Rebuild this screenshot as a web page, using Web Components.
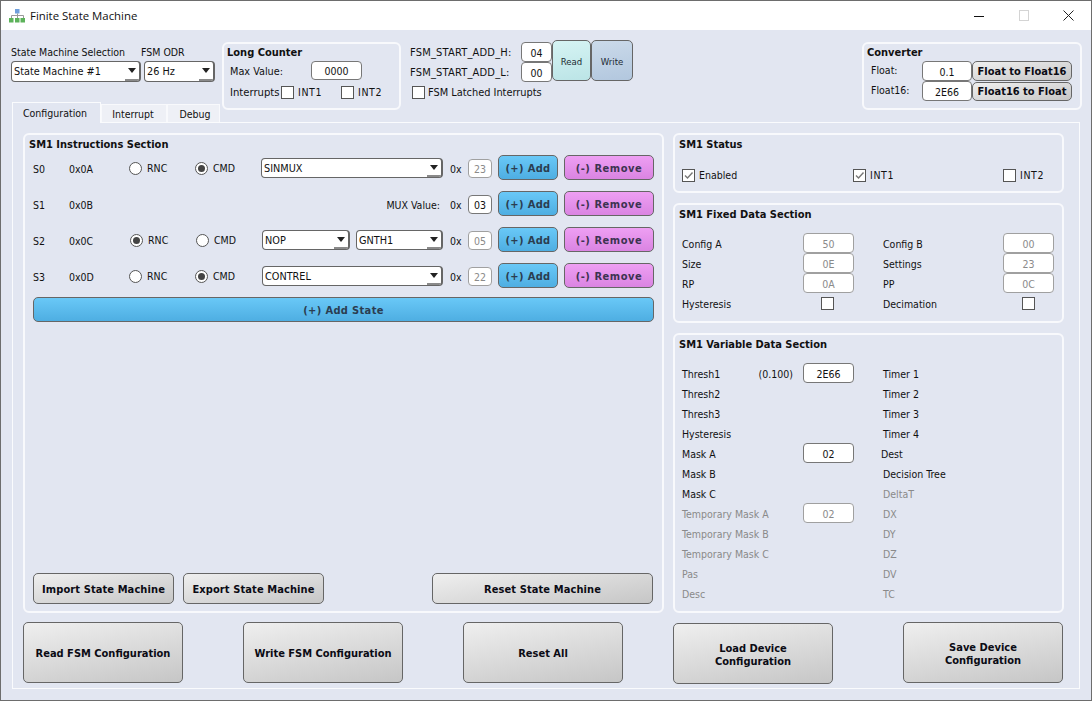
<!DOCTYPE html>
<html>
<head>
<meta charset="utf-8">
<title>Finite State Machine</title>
<style>
html, body { margin: 0; padding: 0; background: #e2e6f1; }
body { font: 10.5px "DejaVu Sans Condensed", "DejaVu Sans", sans-serif; color: #111; }
</style>
</head>
<body>
<fsm-window></fsm-window>
<script>
function define(name, css, html) {
  customElements.define(name, class extends HTMLElement {
    connectedCallback() {
      if (this.shadowRoot) return;
      const root = this.attachShadow({ mode: "open" });
      const a = (k, d = "") => this.hasAttribute(k) ? this.getAttribute(k) : d;
      root.innerHTML = `<style>${css}</style>` + html(a, this);
    }
  });
}

define("fsm-button", `
:host { display: block; box-sizing: border-box; --c1: #efefef; --c2: #c6c6c6; --fg: #0b0b14; --dir: 170deg; --ls: 0; }
:host([tone="blue"]) { --c1: #69c8f7; --c2: #4eaee2; --fg: #2b3d50; --dir: 180deg; --ls: .35px; }
:host([tone="pink"]) { --c1: #ee9ff3; --c2: #da84e2; --fg: #3c3350; --dir: 180deg; --ls: .55px; }
:host([tone="teal"]) { --c1: #d6f4f4; --c2: #bbe4e6; --fg: #1c2b33; }
:host([tone="steel"]) { --c1: #cbdaea; --c2: #b2c7de; --fg: #1c2b33; }
.b {
  box-sizing: border-box; width: 100%; height: 100%; padding-top: 1px;
  display: flex; align-items: center; justify-content: center; text-align: center;
  border: 1px solid #666; border-radius: 5px;
  background: linear-gradient(var(--dir), var(--c1), var(--c2));
  color: var(--fg); font-size: 11px; font-weight: bold; line-height: 13px; white-space: pre-line; letter-spacing: var(--ls);
}
:host([flat]) .b { padding-top: 0; }
:host([low]) .b { padding-top: 3px; }
:host([tone="teal"]) .b, :host([tone="steel"]) .b { font-weight: normal; font-size: 9.5px; }
`, (a) => `<div class="b"><slot></slot></div>`);

define("fsm-field", `
:host { display: block; box-sizing: border-box; }
.f {
  box-sizing: border-box; width: 100%; height: 100%; padding-top: 1px;
  display: flex; align-items: center; justify-content: center;
  background: #fff; border: 1px solid #777; border-radius: 4px;
}
:host([disabled]) .f { color: #8a8a8a; border-color: #a0a0a0; }
`, (a) => `<div class="f"><slot></slot></div>`);

define("fsm-combo", `
:host { display: block; box-sizing: border-box; height: 20px; }
.c {
  box-sizing: border-box; height: 100%; display: flex; overflow: hidden;
  background: #fff; border: 1px solid #666; border-right-width: 2px; border-radius: 4px;
}
.v { flex: 1; padding-left: 2px; line-height: 19px; font-size: 10.8px; }
.d { flex: none; width: 14px; border-bottom: 2px solid #8a8a8a; box-sizing: border-box; display: flex; justify-content: center; padding-top: 6px; }
.d i { width: 0; height: 0; border: 4px solid transparent; border-top: 5px solid #222; border-bottom: 0; }
`, (a) => `<div class="c"><div class="v"><slot></slot></div><div class="d"><i></i></div></div>`);

define("fsm-check", `
:host { display: inline-flex; align-items: center; gap: 4px; height: 14px; white-space: nowrap; }
:host([caps]) { letter-spacing: .6px; }
.box { flex: none; width: 13px; height: 13px; box-sizing: border-box; background: #fff; border: 1px solid #555; display: block; }
`, (a) => `<svg class="box" viewBox="0 0 11 11">${a("checked", null) !== null ? '<path d="M2 5.5 L4.5 8 L9.5 2.5" fill="none" stroke="#777" stroke-width="1.4"/>' : ""}</svg><slot></slot>`);

define("fsm-radio", `
:host { display: inline-flex; align-items: center; gap: 5px; height: 14px; white-space: nowrap; }
.r { flex: none; width: 13px; height: 13px; box-sizing: border-box; border: 1px solid #555; border-radius: 50%; background: #fff; display: flex; align-items: center; justify-content: center; }
:host([checked]) .r::after { content: ""; width: 7px; height: 7px; border-radius: 50%; background: #444; }
`, (a) => `<span class="r"></span><slot></slot>`);

define("fsm-group", `
:host { display: block; box-sizing: border-box; --pad: 4px; --lh: 20px; }
.g { box-sizing: border-box; height: 100%; border: 2px solid #f8f9fc; border-radius: 6px; padding: 0 4px 0 var(--pad); display: flex; flex-direction: column; }
.t { flex: none; height: 18px; line-height: var(--lh); font-size: 11px; font-weight: bold; }
`, (a) => `<div class="g"><div class="t">${a("title")}</div><slot></slot></div>`);

define("fsm-titlebar", `
:host { display: flex; align-items: center; height: 29px; background: #fff; padding-left: 8px; flex: none; }
svg { flex: none; display: block; }
.n { margin-left: 5px; font: 11.4px "Open Sans", "Noto Sans", sans-serif; color: #111; flex: 1; }
.w { flex: none; width: 45px; height: 29px; display: flex; align-items: center; justify-content: center; }
`, () => `
<svg width="16" height="14" viewBox="0 0 16 14">
  <rect x="6" y="0" width="4.5" height="4.5" fill="#6f9fdc"/>
  <path d="M8.5 4.5v4.5M2.5 9V6.5h12V9" fill="none" stroke="#999"/>
  <rect x="0" y="9" width="4.5" height="4.5" fill="#5cb25a"/><rect x="6" y="9" width="4.5" height="4.5" fill="#5cb25a"/><rect x="11.5" y="9" width="4.5" height="4.5" fill="#5cb25a"/>
</svg>
<div class="n">Finite State Machine</div>
<div class="w"><svg width="10" height="10"><path d="M0 5.5h10" stroke="#111"/></svg></div>
<div class="w"><svg width="10" height="11"><rect x="0.5" y="0.5" width="9" height="10" fill="none" stroke="#d4d4d4"/></svg></div>
<div class="w"><svg width="11" height="11"><path d="M0.5 0.5L10.5 10.5M10.5 0.5L0.5 10.5" stroke="#222"/></svg></div>`);

define("fsm-tabbar", `
:host { display: flex; align-items: flex-end; margin-left: 1px; }
.tab { box-sizing: border-box; height: 18px; line-height: 18px; text-align: center; background: #eef0f6; border: 1px solid #f8f9fc; border-bottom: 0; }
.on { height: 21px; line-height: 20px; background: #e2e6f1; border-color: #fafbfd; position: relative; top: 1px; }
`, () => `
<div class="tab on" style="width:89px;padding-right:3px">Configuration</div>
<div class="tab" style="width:66px;padding-right:2px">Interrupt</div>
<div class="tab" style="width:53px;padding-left:3px">Debug</div>`);

define("fsm-top", `
:host { display: flex; height: 92px; padding-left: 10px; flex: none; }
.left { width: 211px; display: flex; flex-direction: column; }
.labels { display: flex; margin-top: 14px; height: 16px; line-height: 16px; }
.combos { display: flex; margin-top: 1px; }
.combos fsm-combo { height: 21px; }
.tabs { margin-top: auto; }
fsm-group { margin-top: 12px; height: 68px; --pad: 3px; --lh: 18px; }
.lc { width: 179px; }
.row { display: flex; align-items: center; }
.start { margin: 10px 0 0 9px; width: 229px; }
.st { display: flex; }
.st .lab { width: 111px; font-size: 11px; letter-spacing: .2px; }
.st .lab div { height: 20px; line-height: 21px; }
.st fsm-field { width: 31px; height: 20px; }
.conv { margin-left: 223px; width: 220px; }
.cg { display: grid; grid-template-columns: 53px 50px 100px; grid-auto-rows: 20px; margin-left: 2px; margin-top: -1px; }
.cg div { line-height: 18px; padding-left: 2px; }
`, () => `
<div class="left">
  <div class="labels"><span style="width:130px">State Machine Selection</span><span>FSM ODR</span></div>
  <div class="combos"><fsm-combo style="width:130px">State Machine #1</fsm-combo><fsm-combo style="width:71px;margin-left:3px">26 Hz</fsm-combo></div>
  <fsm-tabbar class="tabs"></fsm-tabbar>
</div>
<fsm-group class="lc" title="Long Counter">
  <div class="row" style="margin:-2px 0 0 3px;height:20px">
    <span style="width:81px;padding-top:3px;font-size:10.8px">Max Value:</span><fsm-field style="width:51px;height:19px">0000</fsm-field>
  </div>
  <div class="row" style="margin:5px 0 0 3px;height:14px">
    <span style="width:51px;font-size:11.2px">Interrupts</span>
    <fsm-check caps style="width:60px">INT1</fsm-check><fsm-check caps>INT2</fsm-check>
  </div>
</fsm-group>
<div class="start">
  <div class="st">
    <div class="lab"><div style="margin-top:2px">FSM_START_ADD_H:</div><div>FSM_START_ADD_L:</div></div>
    <div style="margin-top:2px"><fsm-field>04</fsm-field><fsm-field>00</fsm-field></div>
    <fsm-button tone="teal" style="width:39px;height:41px">Read</fsm-button>
    <fsm-button tone="steel" style="width:42px;height:41px">Write</fsm-button>
  </div>
  <fsm-check style="margin:3px 0 0 2px;display:flex;gap:3px;font-size:10.9px">FSM Latched Interrupts</fsm-check>
</div>
<fsm-group class="conv" title="Converter">
  <div class="cg">
    <div>Float:</div><fsm-field>0.1</fsm-field><fsm-button flat>Float to Float16</fsm-button>
    <div>Float16:</div><fsm-field>2E66</fsm-field><fsm-button flat style="margin-top:1px">Float16 to Float</fsm-button>
  </div>
</fsm-group>`);

define("fsm-instructions", `
:host { display: block; height: 480px; }
fsm-group { height: 100%; }
.rows { display: grid; grid-template-columns: 36px 60px 66px 66px 182px 7px 18px 24px 66px 96px; grid-auto-rows: 25px; row-gap: 11px; margin: 2px 0 0 4px; align-items: center; width: 621px; }
.rows > span { padding-top: 2px; }
.rows fsm-field { height: 19px; margin-top: 1px; }
.rows fsm-radio { margin-top: 1px; }
.add, .rem { height: 25px; margin-left: 6px; }
.x { grid-column: 7; }
.pair { display: flex; gap: 6px; padding-left: 1px; }
.rows > .mux { grid-column: 3 / 6; text-align: right; padding-right: 3px; }
.foot { margin: auto 0 7px 4px; display: flex; height: 31px; }
.foot fsm-button { height: 31px; --ls: .1px; }
`, () => {
  const tail = (v, dis) => `<span class="x">0x</span><fsm-field ${dis ? "disabled" : ""}>${v}</fsm-field><fsm-button class="add" tone="blue">(+) Add</fsm-button><fsm-button class="rem" tone="pink">(-) Remove</fsm-button>`;
  return `
<fsm-group title="SM1 Instructions Section">
  <div class="rows">
    <span>S0</span><span>0x0A</span><fsm-radio>RNC</fsm-radio><fsm-radio checked>CMD</fsm-radio>
    <fsm-combo>SINMUX</fsm-combo>${tail("23", 1)}
    <span>S1</span><span>0x0B</span><span class="mux">MUX Value:</span>${tail("03")}
    <span>S2</span><span>0x0C</span><fsm-radio checked style="margin-left:1px">RNC</fsm-radio><fsm-radio style="margin-left:1px">CMD</fsm-radio>
    <div class="pair"><fsm-combo style="width:88px">NOP</fsm-combo><fsm-combo style="width:87px">GNTH1</fsm-combo></div>${tail("05", 1)}
    <span>S3</span><span>0x0D</span><fsm-radio>RNC</fsm-radio><fsm-radio checked>CMD</fsm-radio>
    <fsm-combo style="margin-left:1px">CONTREL</fsm-combo>${tail("22", 1)}
    <fsm-button tone="blue" style="grid-column:1 / -1;height:25px;align-self:start;margin-top:-2px">(+) Add State</fsm-button>
  </div>
  <div class="foot">
    <fsm-button style="width:141px">Import State Machine</fsm-button>
    <fsm-button style="width:141px;margin-left:9px">Export State Machine</fsm-button>
    <fsm-button style="width:221px;margin-left:108px">Reset State Machine</fsm-button>
  </div>
</fsm-group>`;
});

define("fsm-right", `
:host { display: flex; flex-direction: column; gap: 10px; height: 480px; }
.status { height: 60px; }
.cks { display: grid; grid-template-columns: 171px 150px auto; margin: 15px 0 0 3px; }
.fixed { height: 120px; }
.vars { height: 280px; }
.grid { display: grid; grid-template-columns: 121px 51px 29px 120px 51px; grid-auto-rows: 20px; align-items: center; margin: 10px 0 0 3px; }
.grid > span { padding-top: 2px; }
fsm-field { height: 20px; }
.grid > span.fc { padding-top: 0; }
.cc { justify-self: center; }
.vl { display: flex; justify-content: space-between; padding-right: 10px; grid-column: 1 / 2; }
.off { color: #8a8a8a; }
.s { grid-column: 4; }
`, () => {
  const left = ["Thresh1", "Thresh2", "Thresh3", "Hysteresis", "Mask A", "Mask B", "Mask C", "Temporary Mask A", "Temporary Mask B", "Temporary Mask C", "Pas", "Desc"];
  const right = ["Timer 1", "Timer 2", "Timer 3", "Timer 4", "Dest", "Decision Tree", "DeltaT", "DX", "DY", "DZ", "DV", "TC"];
  const cell = { 0: "<fsm-field>2E66</fsm-field>", 4: "<fsm-field>02</fsm-field>", 7: "<fsm-field disabled>02</fsm-field>" };
  const rows = left.map((l, i) => {
    const off = i >= 7 ? "off" : "";
    const offR = i >= 6 ? "off" : "";
    const name = i === 0 ? `<span class="vl"><span>${l}</span><span>(0.100)</span></span>` : `<span class="${off}" style="grid-column:1">${l}</span>`;
    return name + (cell[i] ? `<span class="fc" style="grid-column:2">${cell[i]}</span>` : "") + `<span class="s ${offR}"${i === 4 ? ' style="margin-left:-2px"' : ""}>${right[i]}</span>`;
  }).join("");
  const fx = (a, av, b, bv) => `<span>${a}</span><fsm-field disabled>${av}</fsm-field><span></span><span>${b}</span><fsm-field disabled>${bv}</fsm-field>`;
  return `
<fsm-group class="status" title="SM1 Status">
  <div class="cks"><fsm-check checked>Enabled</fsm-check><fsm-check checked caps>INT1</fsm-check><fsm-check caps>INT2</fsm-check></div>
</fsm-group>
<fsm-group class="fixed" title="SM1 Fixed Data Section">
  <div class="grid">
    ${fx("Config A", "50", "Config B", "00")}${fx("Size", "0E", "Settings", "23")}${fx("RP", "0A", "PP", "0C")}
    <span>Hysteresis</span><fsm-check class="cc" style="margin-right:2px"></fsm-check><span></span><span>Decimation</span><fsm-check class="cc"></fsm-check>
  </div>
</fsm-group>
<fsm-group class="vars" title="SM1 Variable Data Section"><div class="grid">${rows}</div></fsm-group>`;
});

define("fsm-actions", `
:host { display: flex; margin-top: 9px; height: 61px; }
fsm-button { width: 160px; height: 61px; }
`, () => `
<fsm-button>Read FSM Configuration</fsm-button>
<fsm-button style="margin-left:60px">Write FSM Configuration</fsm-button>
<fsm-button style="margin-left:60px">Reset All</fsm-button>
<fsm-button low style="margin:1px 0 0 50px">Load Device
Configuration</fsm-button>
<fsm-button low style="margin-left:70px">Save Device
Configuration</fsm-button>`);

define("fsm-window", `
:host { display: flex; flex-direction: column; box-sizing: border-box; width: 1092px; height: 701px; border: 1px solid #6d6d6d; background: #e2e6f1; overflow: hidden; }
.pane { box-sizing: border-box; width: 1068px; height: 567px; margin-left: 11px; padding: 10px 0 0 10px; border: 1px solid #fafbfd; }
.cols { display: grid; grid-template-columns: 641px 391px; column-gap: 9px; }
`, () => `
<fsm-titlebar></fsm-titlebar>
<fsm-top></fsm-top>
<div class="pane">
  <div class="cols"><fsm-instructions></fsm-instructions><fsm-right></fsm-right></div>
  <fsm-actions></fsm-actions>
</div>`);
</script>
</body>
</html>
